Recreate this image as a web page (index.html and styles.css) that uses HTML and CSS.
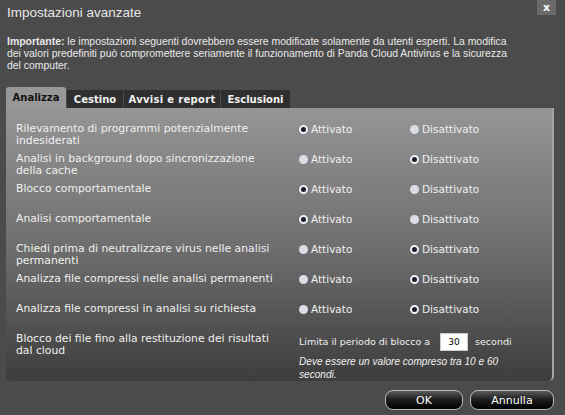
FILE: index.html
```html
<!DOCTYPE html>
<html lang="it">
  <head>
    <meta charset="UTF-8" />
    <title>Impostazioni avanzate</title>
    <link rel="stylesheet" href="styles.css">
  </head>
  <body>
    <div class="dialog">
      <div class="titleBar">
        <h1 class="title">Impostazioni avanzate</h1>
        <button class="closeBtn">x</button>
      </div>
      <p class="notice">
        <b>Importante:</b> le impostazioni seguenti dovrebbero essere modificate solamente da utenti esperti. La modifica
        dei valori predefiniti può compromettere seriamente il funzionamento di Panda Cloud Antivirus e la sicurezza
        del computer.
      </p>

      <ul class="tabs">
        <li class="tab active tabScan">Analizza</li>
        <li class="tab tabBin">Cestino</li>
        <li class="tab tabAlerts">Avvisi e report</li>
        <li class="tab tabExcl">Esclusioni</li>
      </ul>

      <div class="panel">
        <div class="row">
          <div class="label">Rilevamento di programmi potenzialmente indesiderati</div>
          <label class="opt"><span class="radio on"></span>Attivato</label>
          <label class="opt"><span class="radio"></span>Disattivato</label>
        </div>
        <div class="row">
          <div class="label">Analisi in background dopo sincronizzazione della cache</div>
          <label class="opt"><span class="radio"></span>Attivato</label>
          <label class="opt"><span class="radio on"></span>Disattivato</label>
        </div>
        <div class="row">
          <div class="label">Blocco comportamentale</div>
          <label class="opt"><span class="radio on"></span>Attivato</label>
          <label class="opt"><span class="radio"></span>Disattivato</label>
        </div>
        <div class="row">
          <div class="label">Analisi comportamentale</div>
          <label class="opt"><span class="radio on"></span>Attivato</label>
          <label class="opt"><span class="radio"></span>Disattivato</label>
        </div>
        <div class="row">
          <div class="label">Chiedi prima di neutralizzare virus nelle analisi permanenti</div>
          <label class="opt"><span class="radio"></span>Attivato</label>
          <label class="opt"><span class="radio on"></span>Disattivato</label>
        </div>
        <div class="row">
          <div class="label">Analizza file compressi nelle analisi permanenti</div>
          <label class="opt"><span class="radio"></span>Attivato</label>
          <label class="opt"><span class="radio on"></span>Disattivato</label>
        </div>
        <div class="row">
          <div class="label">Analizza file compressi in analisi su richiesta</div>
          <label class="opt"><span class="radio"></span>Attivato</label>
          <label class="opt"><span class="radio on"></span>Disattivato</label>
        </div>
        <div class="row lastRow">
          <div class="label">Blocco dei file fino alla restituzione dei risultati dal cloud</div>
          <div class="limit">
            <div class="limitLine">
              Limita il periodo di blocco a
              <input type="text" class="secInput" value="30" />
              secondi
            </div>
            <div class="hint">Deve essere un valore compreso tra 10 e 60 secondi.</div>
          </div>
        </div>
      </div>

      <div class="footer">
        <button class="btn">OK</button>
        <button class="btn">Annulla</button>
      </div>
    </div>
  </body>
</html>
```

FILE: styles.css
```css
body {
  margin: 0;
  padding: 0;
  background-color: #4b4b4b;
  font-family: "DejaVu Sans", Verdana, sans-serif;
  color: #f0f0f0;
  height: 415px;
  overflow: hidden;
}

.dialog {
  padding: 0 11px 0 6px;
}

.titleBar {
  display: flex;
  justify-content: space-between;
  align-items: flex-start;
  height: 20px;
}
.title {
  margin: 5px 0 0 1px;
  font-family: "Liberation Sans", Arial, sans-serif;
  font-size: 13.5px;
  line-height: 16px;
  font-weight: normal;
  color: #e6e6e6;
}
.closeBtn {
  width: 19px;
  height: 15px;
  margin-right: -2px;
  padding: 0;
  border: none;
  background-color: #6b6b6b;
  color: #fff;
  font-family: "DejaVu Sans", sans-serif;
  font-weight: bold;
  font-size: 11px;
  line-height: 13px;
}

.notice {
  width: 510px;
  margin: 16px 0 0 1px;
  font-family: "Liberation Sans", Arial, sans-serif;
  font-size: 10.45px;
  line-height: 12px;
  color: #e8e8e8;
}

.tabs {
  list-style-type: none;
  display: flex;
  align-items: flex-end;
  gap: 1px;
  margin: 15px 0 0 0;
  padding: 0;
  height: 21px;
}
.tab {
  background-color: #2f2f2f;
  color: #f2f2f2;
  font-weight: bold;
  font-size: 10px;
  height: 18px;
  line-height: 19px;
  text-align: center;
}
.tab.active {
  background-color: #979797;
  color: #111;
  height: 21px;
  line-height: 22px;
  border-radius: 3px 3px 0 0;
}
.tabScan {
  width: 60px;
}
.tabBin {
  width: 56px;
}
.tabAlerts {
  width: 96px;
  letter-spacing: 0.3px;
}
.tabExcl {
  width: 69px;
}

.panel {
  background: linear-gradient(180deg, #959595 0%, #6f6f6f 50%, #3d3d3d 100%);
  border-right: 2px solid #a3a3a3;
  border-radius: 0 0 5px 5px;
  padding: 15px 0 0 10px;
  height: 258px;
  font-size: 10.8px;
  line-height: 12px;
}

.row {
  display: grid;
  grid-template-columns: 283px 111px 1fr;
  height: 30px;
}
.label {
  padding-right: 21px;
}
.opt {
  display: flex;
  align-items: flex-start;
  gap: 3px;
  font-size: 10.5px;
}

.radio {
  width: 9px;
  height: 9px;
  margin-top: 2px;
  border-radius: 50%;
  background-color: #dcdce6;
  box-sizing: border-box;
}
.radio.on {
  background-color: #1d1d2a;
  border: 2px solid #eef0f6;
}

.lastRow {
  grid-template-columns: 283px 1fr;
}
.limitLine {
  display: flex;
  align-items: center;
  margin-top: 0;
  font-size: 9.5px;
}
.secInput {
  width: 28px;
  height: 18px;
  margin: 0 7px 0 10px;
  border: 1px solid #ccc;
  padding: 0;
  box-sizing: border-box;
  font-family: "DejaVu Sans", sans-serif;
  font-size: 9px;
  text-align: center;
}
.hint {
  font-family: "Liberation Sans", Arial, sans-serif;
  font-style: italic;
  font-size: 10.1px;
  line-height: 13px;
  margin-top: 4px;
  width: 200px;
}

.footer {
  display: flex;
  justify-content: flex-end;
  gap: 7px;
  margin-top: 9px;
}
.btn {
  width: 78px;
  height: 20px;
  border: 1px solid #b8b8b8;
  border-radius: 8px;
  background: linear-gradient(180deg, #5a5a5a 0%, #1a1a1a 50%, #000 100%);
  color: #fff;
  font-family: "DejaVu Sans", sans-serif;
  font-size: 11px;
}
.btn:last-child {
  width: 84px;
}
```
